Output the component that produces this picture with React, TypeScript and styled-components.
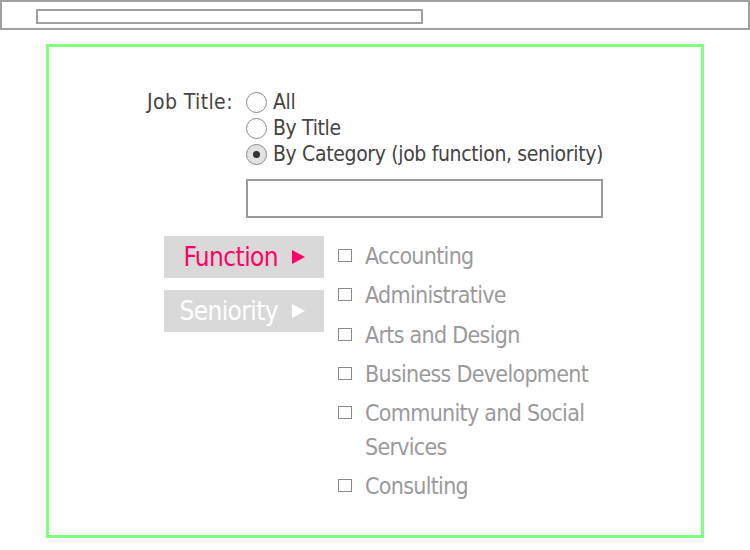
import React from "react";
import styled, { createGlobalStyle } from "styled-components";

const Global = createGlobalStyle`
  html, body { margin: 0; padding: 0; background: #fff; }
  body { font-family: "DejaVu Sans Condensed", "Liberation Sans", sans-serif; }
  * { box-sizing: border-box; }
`;

const Page = styled.div`
  width: 750px;
  height: 550px;
  display: flex;
  flex-direction: column;
`;

const TopBar = styled.div`
  height: 30px;
  border: 2px solid #a0a0a0;
  padding: 7px 0 0 34px;
`;

const UrlField = styled.div`
  width: 387px;
  height: 15px;
  border: 2px solid #a0a0a0;
`;

const Frame = styled.div`
  margin: 14px 0 0 46px;
  width: 658px;
  height: 494px;
  border: 3px solid #80ff80;
  padding: 42px 0 0 98px;
`;

const JobRow = styled.div`
  display: flex;
  align-items: flex-start;
  gap: 10px;
`;

const Label = styled.div`
  width: 89px;
  font-size: 21px;
  line-height: 26px;
  letter-spacing: 0.4px;
  color: #444;
`;

const Options = styled.div`
  display: flex;
  flex-direction: column;
`;

const RadioRow = styled.div`
  display: flex;
  align-items: center;
  gap: 6px;
  height: 26px;
  font-size: 21px;
  letter-spacing: -0.35px;
  color: #444;
`;

const Radio = styled.span<{ $checked?: boolean }>`
  flex: none;
  width: 21px;
  height: 21px;
  border-radius: 50%;
  border: 1.5px solid #8a8a8a;
  background: ${(p) => (p.$checked ? "#e2e2e2" : "#fff")};
  display: flex;
  align-items: center;
  justify-content: center;
  &::after {
    content: "";
    display: ${(p) => (p.$checked ? "block" : "none")};
    width: 7px;
    height: 7px;
    border-radius: 50%;
    background: #333;
  }
`;

const TextBox = styled.div`
  margin-top: 12px;
  width: 357px;
  height: 39px;
  border: 2px solid #9a9a9a;
  background: #fff;
`;

const Picker = styled.div`
  display: flex;
  gap: 14px;
  margin: 18px 0 0 17px;
`;

const Tabs = styled.div`
  display: flex;
  flex-direction: column;
  gap: 12px;
`;

const Tab = styled.div<{ $active?: boolean }>`
  width: 160px;
  height: 42px;
  background: #d9d9d9;
  color: ${(p) => (p.$active ? "#ff0066" : "#ffffff")};
  font-size: 26px;
  letter-spacing: -0.6px;
  display: flex;
  align-items: center;
  justify-content: flex-end;
  padding-right: 19px;
  gap: 14px;
`;

const Arrow = styled.span`
  width: 0;
  height: 0;
  border-top: 7px solid transparent;
  border-bottom: 7px solid transparent;
  border-left: 13px solid currentColor;
`;

const List = styled.div`
  display: flex;
  flex-direction: column;
  gap: 5.3px;
  margin-top: 3px;
`;

const Item = styled.div`
  display: flex;
  align-items: flex-start;
  gap: 13px;
  width: 270px;
  font-size: 23px;
  letter-spacing: -0.7px;
  line-height: 34px;
  color: #9a9a9a;
`;

const Box = styled.span`
  flex: none;
  width: 14px;
  height: 13px;
  margin-top: 10px;
  border: 1.5px solid #8a8a8a;
`;

const functions = [
  "Accounting",
  "Administrative",
  "Arts and Design",
  "Business Development",
  "Community and Social Services",
  "Consulting",
];

export default function App() {
  return (
    <Page>
      <Global />
      <TopBar>
        <UrlField />
      </TopBar>
      <Frame>
        <JobRow>
          <Label>Job Title:</Label>
          <Options>
            <RadioRow>
              <Radio />
              All
            </RadioRow>
            <RadioRow>
              <Radio />
              By Title
            </RadioRow>
            <RadioRow>
              <Radio $checked />
              By Category (job function, seniority)
            </RadioRow>
            <TextBox />
          </Options>
        </JobRow>
        <Picker>
          <Tabs>
            <Tab $active>
              Function <Arrow />
            </Tab>
            <Tab>
              Seniority <Arrow />
            </Tab>
          </Tabs>
          <List>
            {functions.map((f) => (
              <Item key={f}>
                <Box />
                <span>{f}</span>
              </Item>
            ))}
          </List>
        </Picker>
      </Frame>
    </Page>
  );
}
